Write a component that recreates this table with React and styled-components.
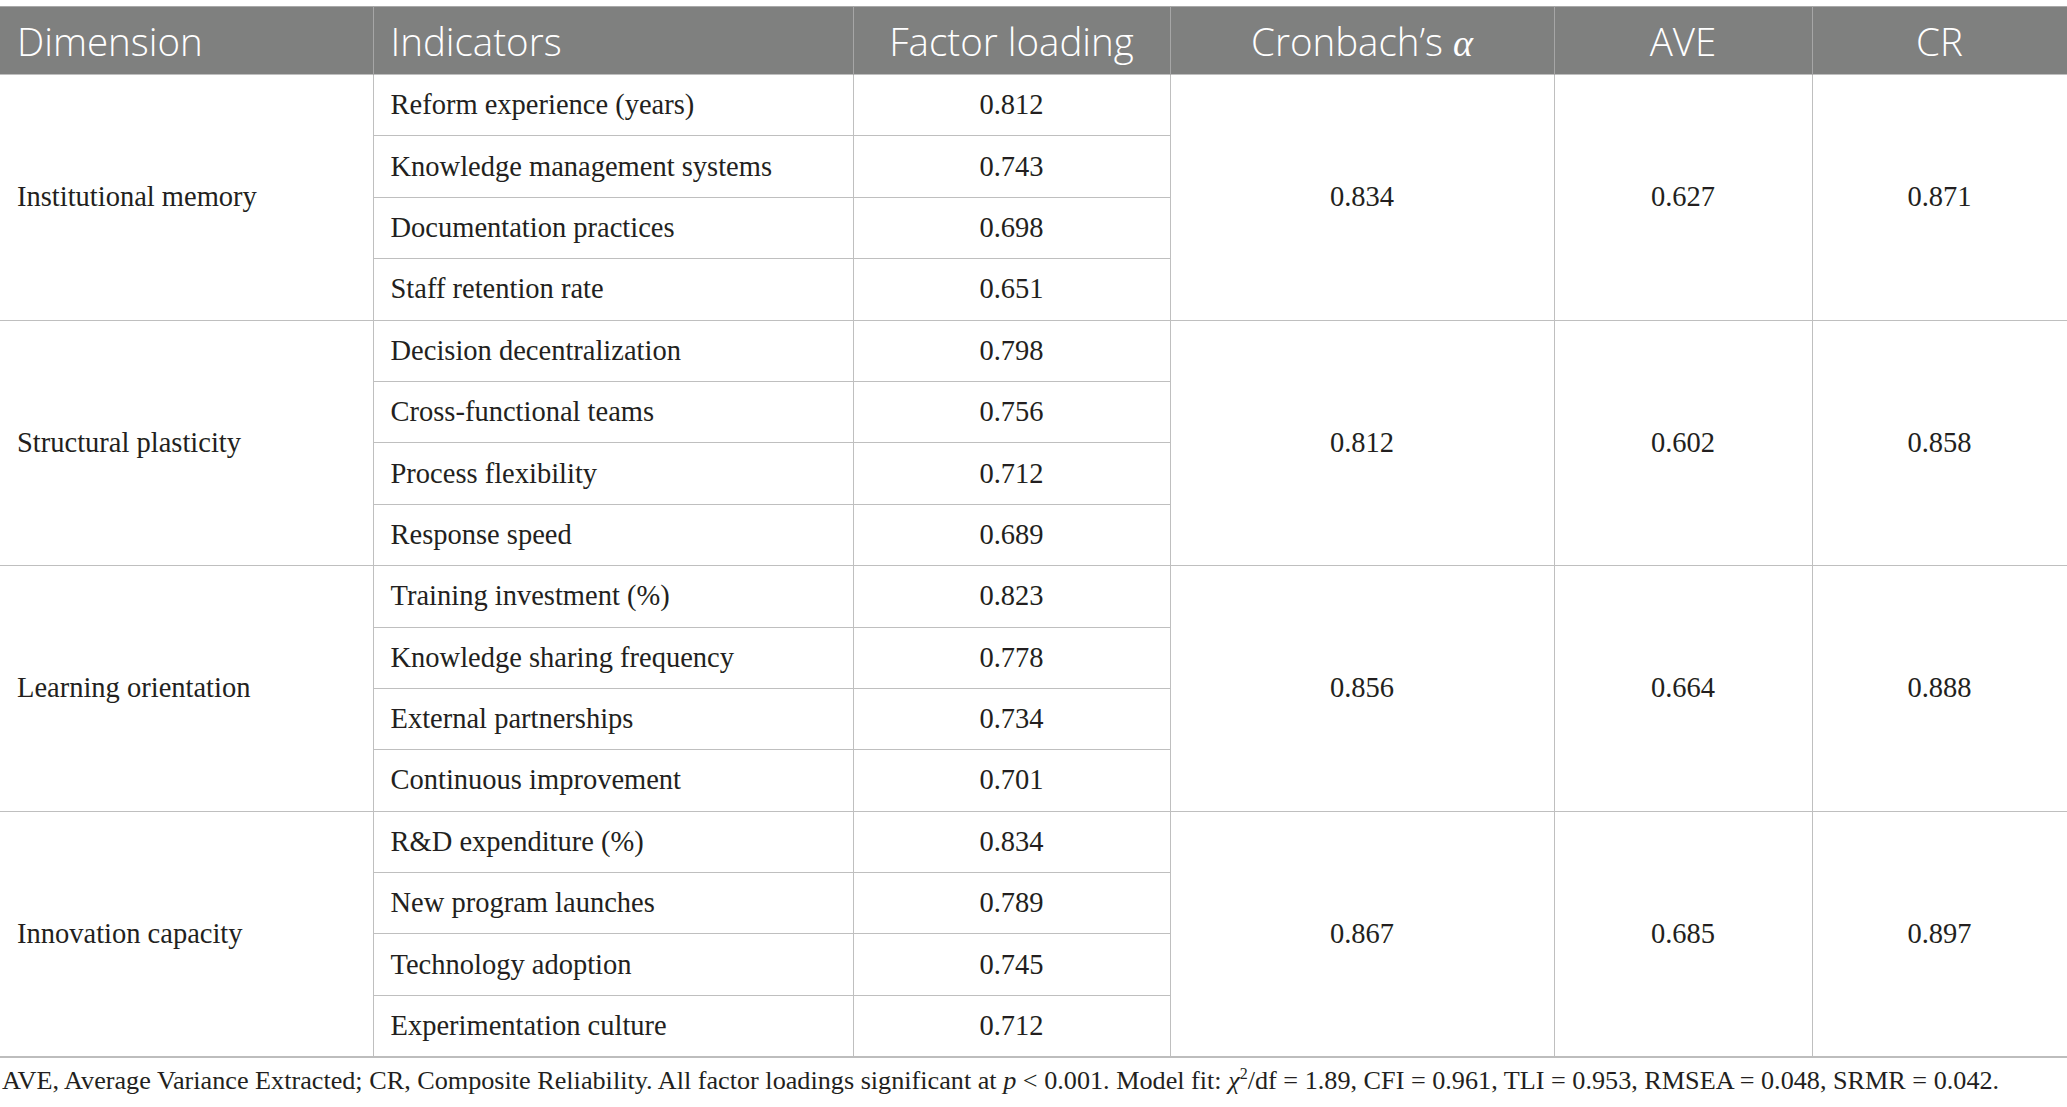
import React from "react";
import styled, { createGlobalStyle } from "styled-components";

const GlobalStyle = createGlobalStyle`
  html, body {
    margin: 0;
    padding: 0;
    background: #ffffff;
  }
`;

const groups = [
  {
    name: "Institutional memory",
    alpha: "0.834",
    ave: "0.627",
    cr: "0.871",
    items: [
      ["Reform experience (years)", "0.812"],
      ["Knowledge management systems", "0.743"],
      ["Documentation practices", "0.698"],
      ["Staff retention rate", "0.651"],
    ],
  },
  {
    name: "Structural plasticity",
    alpha: "0.812",
    ave: "0.602",
    cr: "0.858",
    items: [
      ["Decision decentralization", "0.798"],
      ["Cross-functional teams", "0.756"],
      ["Process flexibility", "0.712"],
      ["Response speed", "0.689"],
    ],
  },
  {
    name: "Learning orientation",
    alpha: "0.856",
    ave: "0.664",
    cr: "0.888",
    items: [
      ["Training investment (%)", "0.823"],
      ["Knowledge sharing frequency", "0.778"],
      ["External partnerships", "0.734"],
      ["Continuous improvement", "0.701"],
    ],
  },
  {
    name: "Innovation capacity",
    alpha: "0.867",
    ave: "0.685",
    cr: "0.897",
    items: [
      ["R&D expenditure (%)", "0.834"],
      ["New program launches", "0.789"],
      ["Technology adoption", "0.745"],
      ["Experimentation culture", "0.712"],
    ],
  },
];

const App = () => {
  return (
    <Page>
      <GlobalStyle />
      <Table>
        <colgroup>
          <col style={{ width: 373 }} />
          <col style={{ width: 480 }} />
          <col style={{ width: 317 }} />
          <col style={{ width: 384 }} />
          <col style={{ width: 258 }} />
          <col style={{ width: 255 }} />
        </colgroup>
        <thead>
          <HeadRow>
            <Th>Dimension</Th>
            <Th>Indicators</Th>
            <Th $center>Factor loading</Th>
            <Th $center>
              Cronbach’s <Alpha>α</Alpha>
            </Th>
            <Th $center>AVE</Th>
            <Th $center>CR</Th>
          </HeadRow>
        </thead>
        <tbody>
          {groups.map((g) =>
            g.items.map(([label, value], i) => (
              <Row key={g.name + label}>
                {i === 0 && <Td rowSpan={4}>{g.name}</Td>}
                <Td>{label}</Td>
                <Td $center>{value}</Td>
                {i === 0 && (
                  <>
                    <Td rowSpan={4} $center>
                      {g.alpha}
                    </Td>
                    <Td rowSpan={4} $center>
                      {g.ave}
                    </Td>
                    <Td rowSpan={4} $center>
                      {g.cr}
                    </Td>
                  </>
                )}
              </Row>
            ))
          )}
        </tbody>
      </Table>
      <Note>
        AVE, Average Variance Extracted; CR, Composite Reliability. All factor
        loadings significant at <i>p</i> &lt; 0.001. Model fit:{" "}
        <i>χ</i>
        <sup>2</sup>/df = 1.89, CFI = 0.961, TLI = 0.953, RMSEA = 0.048, SRMR =
        0.042.
      </Note>
    </Page>
  );
};

const Page = styled.div`
  width: 2067px;
  padding-top: 6px;
`;

const Table = styled.table`
  width: 2067px;
  table-layout: fixed;
  border-collapse: collapse;
  border-top: 1px solid #a9a9a9;
  border-bottom: 2px solid #bdbdbd;
`;

const HeadRow = styled.tr`
  height: 68px;
  background: #7f807f;
`;

const Th = styled.th`
  padding: 0 17px;
  text-align: ${(p) => (p.$center ? "center" : "left")};
  font-family: "Open Sans", "Noto Sans", sans-serif;
  font-weight: 350;
  font-size: 38.5px;
  color: #ffffff;
  border-left: 1px solid #a6a6a6;
  border-right: 1px solid #a6a6a6;
  white-space: nowrap;
  &:first-child {
    border-left: none;
  }
`;

const Alpha = styled.span`
  font-family: "Liberation Serif", serif;
  font-style: italic;
  font-weight: 400;
  font-size: 38px;
`;

const Row = styled.tr`
  height: 61.4px;
`;

const Td = styled.td`
  padding: 0 17px;
  text-align: ${(p) => (p.$center ? "center" : "left")};
  font-family: "Liberation Serif", serif;
  font-size: 28.5px;
  color: #231f20;
  border: 1px solid #bfbfbf;
  white-space: nowrap;
  &:first-child {
    border-left: none;
  }
`;

const Note = styled.p`
  margin: 8px 0 0 2px;
  font-family: "Liberation Serif", serif;
  font-size: 26.2px;
  color: #231f20;
  white-space: nowrap;
  sup {
    font-size: 16px;
    line-height: 0;
  }
`;

export default App;
